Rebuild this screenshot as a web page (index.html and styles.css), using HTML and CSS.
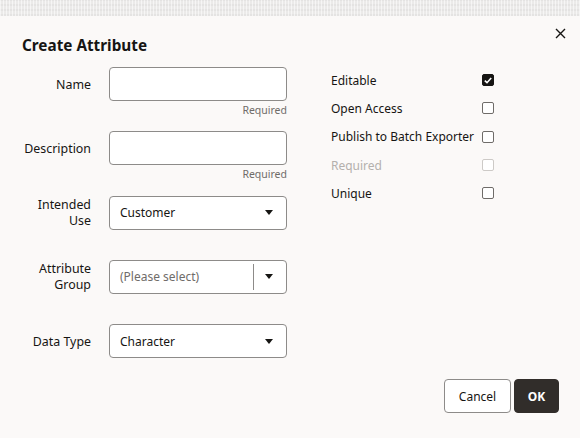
FILE: index.html
```html
<!DOCTYPE html>
<html>
<head>
<meta charset="utf-8">
<link rel="stylesheet" href="styles.css">
</head>
<body>
<div class="backdrop"></div>
<div class="dialog">
  <div class="header">
    <h1 class="title">Create Attribute</h1>
    <button class="close" aria-label="Close">
      <svg width="11" height="11" viewBox="0 0 11 11"><path d="M1 1L10 10M10 1L1 10" stroke="#161513" stroke-width="1.4" fill="none"/></svg>
    </button>
  </div>
  <div class="body">
    <div class="form">
      <div class="row">
        <label class="label">Name</label>
        <div class="field">
          <div class="input"></div>
          <div class="hint">Required</div>
        </div>
      </div>
      <div class="row">
        <label class="label">Description</label>
        <div class="field">
          <div class="input"></div>
          <div class="hint">Required</div>
        </div>
      </div>
      <div class="row">
        <label class="label">Intended<br>Use</label>
        <div class="field">
          <div class="input select"><span class="value">Customer</span><span class="arrow"></span></div>
        </div>
      </div>
      <div class="row">
        <label class="label">Attribute<br>Group</label>
        <div class="field">
          <div class="input select"><span class="value placeholder">(Please select)</span><span class="divider"></span><span class="arrow"></span></div>
        </div>
      </div>
      <div class="row">
        <label class="label">Data Type</label>
        <div class="field">
          <div class="input select"><span class="value">Character</span><span class="arrow"></span></div>
        </div>
      </div>
    </div>
    <div class="checks">
      <div class="check-row"><span class="check-label">Editable</span><span class="box checked"><svg width="8" height="7" viewBox="0 0 8 7"><path d="M0.8 3.6L3 5.7L7.2 1" stroke="#fff" stroke-width="1.6" fill="none"/></svg></span></div>
      <div class="check-row"><span class="check-label">Open Access</span><span class="box"></span></div>
      <div class="check-row"><span class="check-label">Publish to Batch Exporter</span><span class="box"></span></div>
      <div class="check-row disabled"><span class="check-label">Required</span><span class="box"></span></div>
      <div class="check-row"><span class="check-label">Unique</span><span class="box"></span></div>
    </div>
  </div>
  <div class="footer">
    <button class="btn">Cancel</button>
    <button class="btn primary">OK</button>
  </div>
</div>
</body>
</html>
```

FILE: styles.css
```css
* { box-sizing: border-box; }
html, body { margin: 0; padding: 0; }
body {
  width: 580px;
  height: 438px;
  overflow: hidden;
  background: #fbf9f8;
  font-family: "Noto Sans", "Open Sans", sans-serif;
  color: #161513;
  font-size: 12px;
}
.backdrop {
  height: 16px;
  background-color: #ebeae9;
  background-image: repeating-linear-gradient(90deg, rgba(255,255,255,0.55) 0 1px, transparent 1px 3px),
                    repeating-linear-gradient(0deg, rgba(0,0,0,0.03) 0 2px, transparent 2px 5px);
}
.dialog {
  height: 422px;
  background: #fbf9f8;
  padding: 0 21px 0 22px;
  display: flex;
  flex-direction: column;
}
.header {
  flex-shrink: 0;
  display: flex;
  justify-content: space-between;
  align-items: flex-start;
  height: 51px;
  padding-top: 19px;
}
.title {
  margin: 0;
  font-size: 15.3px;
  font-weight: 700;
  line-height: 20px;
}
.close {
  border: none;
  background: none;
  padding: 0;
  margin: -7px -7px 0 0;
  width: 11px;
  height: 11px;
  display: flex;
  align-items: center;
  justify-content: center;
}
.body {
  flex-shrink: 0;
  display: flex;
  gap: 44px;
}
.form {
  display: flex;
  flex-direction: column;
}
.row {
  display: flex;
  gap: 18px;
  height: 64.25px;
  align-items: flex-start;
}
.row:last-child { height: 34px; }
.label {
  width: 69px;
  height: 34px;
  display: flex;
  align-items: center;
  justify-content: flex-end;
  text-align: right;
  font-size: 12.4px;
  line-height: 16px;
  padding-top: 1px;
}
.field {
  width: 178px;
  display: flex;
  flex-direction: column;
}
.input {
  height: 34px;
  background: #fff;
  border: 1px solid #8d8b89;
  border-radius: 4px;
  display: flex;
  align-items: center;
  padding: 0 13px 0 10px;
}
.value { flex: 1; }
.placeholder { color: #6f6c69; }
.arrow {
  width: 0;
  height: 0;
  border-left: 4.5px solid transparent;
  border-right: 4.5px solid transparent;
  border-top: 5px solid #161513;
}
.divider {
  width: 1px;
  height: 26px;
  background: #8d8b89;
  margin-right: 11px;
}
.hint {
  text-align: right;
  font-size: 10.5px;
  line-height: 14px;
  margin-top: 2px;
  color: #6f6c69;
}
.checks {
  display: flex;
  flex-direction: column;
  margin-top: -1px;
}
.check-row {
  display: flex;
  align-items: center;
  height: 28.3px;
}
.check-label {
  width: 151px;
  white-space: nowrap;
}
.box {
  width: 12px;
  height: 12px;
  border: 1px solid #6f6c69;
  border-radius: 2px;
  background: #fff;
  display: flex;
  align-items: center;
  justify-content: center;
}
.box.checked {
  background: #161513;
  border-color: #161513;
}
.disabled .check-label { color: #b4b0ad; }
.disabled .box { border-color: #cdcac7; }
.footer {
  margin-top: auto;
  display: flex;
  justify-content: flex-end;
  gap: 3px;
  padding-bottom: 25px;
}
.btn {
  font-family: "Noto Sans", "Open Sans", sans-serif;
  font-size: 12px;
  height: 34px;
  border-radius: 4px;
  border: 1px solid #8d8b89;
  background: #fff;
  color: #161513;
  padding: 0;
  width: 67px;
}
.btn.primary {
  background: #312d2a;
  border-color: #312d2a;
  color: #fff;
  font-weight: 700;
  width: 45px;
}
```
